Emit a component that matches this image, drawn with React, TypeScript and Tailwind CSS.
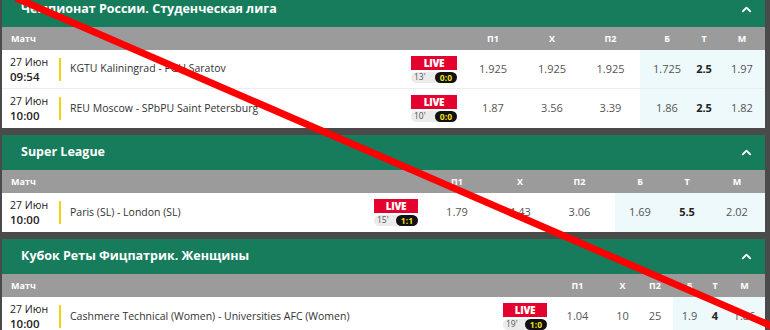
import { ChevronUp } from "lucide-react";

type Col = { label: string; w: string };

type Match = {
  date: string;
  time: string;
  teams: string;
  minute: string;
  score: string;
  odds: string[];
};

interface LeagueProps {
  title: string;
  liveW: string;
  cols: Col[];
  blueFrom: number;
  matches: Match[];
}

const LiveBadge = ({ minute, score }: { minute: string; score: string }) => (
  <div className="flex flex-col items-stretch gap-[2px]">
    <div className="h-[14px] bg-[#e4032e] text-white text-[10px] font-extrabold leading-[14px] text-center tracking-tight">
      LIVE
    </div>
    <div className="flex items-center justify-between h-[11px] rounded-full bg-[#ebebeb]">
      <span className="pl-[3px] text-[8.5px] leading-none text-[#555]">{minute}</span>
      <span className="h-[11px] px-[5px] rounded-full bg-[#111] text-[#f0df12] text-[8.5px] font-bold leading-[11px]">
        {score}
      </span>
    </div>
  </div>
);

const League = ({ title, liveW, cols, blueFrom, matches }: LeagueProps) => (
  <section className="bg-white">
    <div className="h-[35px] bg-[#167c5b] flex items-center justify-between pl-[19px] pr-[11px]">
      <h2 className="text-white text-[12.5px] font-bold">{title}</h2>
      <ChevronUp className="w-[15px] h-[15px] text-white" strokeWidth={3} />
    </div>

    <div className="h-[23px] bg-[#9b9b9b] flex items-center text-white text-[9px] font-bold">
      <div className="flex-1 pl-[9px]">Матч</div>
      <div className={liveW} />
      {cols.map((c) => (
        <div key={c.label} className={`${c.w} text-center`}>
          {c.label}
        </div>
      ))}
    </div>

    <div className="divide-y divide-[#ececec]">
      {matches.map((m) => (
        <div key={m.teams} className="h-[39px] flex items-stretch">
          <div className="flex-1 flex items-center pl-[8px]">
            <div className="w-[49px] flex flex-col gap-[1px] text-[#222]">
              <span className="text-[10.5px] leading-[13px]">{m.date}</span>
              <span className="text-[11.5px] leading-[13px] font-semibold">{m.time}</span>
            </div>
            <div className="w-[2px] h-[23px] bg-[#f2d30c]" />
            <div className="pl-[9px] text-[10.5px] text-[#333]">{m.teams}</div>
          </div>
          <div className={`${liveW} flex items-center`}>
            <div className="w-full">
              <LiveBadge minute={m.minute} score={m.score} />
            </div>
          </div>
          {cols.map((c, i) => (
            <div
              key={c.label}
              className={`${c.w} flex items-center justify-center text-[11px] ${
                i >= blueFrom ? "bg-[#eef9fc]" : ""
              } ${c.label === "Т" ? "font-bold text-[#222]" : "text-[#555]"}`}
            >
              {m.odds[i]}
            </div>
          ))}
        </div>
      ))}
    </div>
  </section>
);

export default function App() {
  return (
    <div
      className="relative w-[770px] h-[330px] overflow-hidden bg-[#4a4a4a]"
      style={{ fontFamily: '"Open Sans", "Liberation Sans", sans-serif' }}
    >
      <div className="-mt-[8px] pl-[2px] pr-[5px] flex flex-col gap-[7px]">
        <League
          title="Чемпионат России. Студенческая лига"
          liveW="w-[46px]"
          blueFrom={3}
          cols={[
            { label: "П1", w: "w-[60px] ml-[6px]" },
            { label: "X", w: "w-[58px]" },
            { label: "П2", w: "w-[59px]" },
            { label: "Б", w: "w-[54px]" },
            { label: "Т", w: "w-[20px]" },
            { label: "М", w: "w-[51px] pl-[5px]" },
          ]}
          matches={[
            {
              date: "27 Июн",
              time: "09:54",
              teams: "KGTU Kaliningrad - PGU Saratov",
              minute: "13'",
              score: "0:0",
              odds: ["1.925", "1.925", "1.925", "1.725", "2.5", "1.97"],
            },
            {
              date: "27 Июн",
              time: "10:00",
              teams: "REU Moscow - SPbPU Saint Petersburg",
              minute: "10'",
              score: "0:0",
              odds: ["1.87", "3.56", "3.39", "1.86", "2.5", "1.82"],
            },
          ]}
        />
        <League
          title="Super League"
          liveW="w-[44px]"
          blueFrom={3}
          cols={[
            { label: "П1", w: "w-[78px]" },
            { label: "X", w: "w-[48px]" },
            { label: "П2", w: "w-[71px]" },
            { label: "Б", w: "w-[50px]" },
            { label: "Т", w: "w-[44px]" },
            { label: "М", w: "w-[56px]" },
          ]}
          matches={[
            {
              date: "27 Июн",
              time: "10:00",
              teams: "Paris (SL) - London (SL)",
              minute: "15'",
              score: "1:1",
              odds: ["1.79", "4.43", "3.06", "1.69", "5.5", "2.02"],
            },
          ]}
        />
        <League
          title="Кубок Реты Фицпатрик. Женщины"
          liveW="w-[44px]"
          blueFrom={3}
          cols={[
            { label: "П1", w: "w-[61px]" },
            { label: "X", w: "w-[29px]" },
            { label: "П2", w: "w-[36px]" },
            { label: "Б", w: "w-[33px]" },
            { label: "Т", w: "w-[18px]" },
            { label: "М", w: "w-[41px]" },
          ]}
          matches={[
            {
              date: "27 Июн",
              time: "10:00",
              teams: "Cashmere Technical (Women) - Universities AFC (Women)",
              minute: "19'",
              score: "1:0",
              odds: ["1.04", "10", "25", "1.9", "4", "1.86"],
            },
          ]}
        />
      </div>

      <svg
        className="absolute inset-0 pointer-events-none"
        width="770"
        height="330"
        viewBox="0 0 770 330"
      >
        <line x1="16" y1="-2" x2="776" y2="328" stroke="#ff0000" strokeWidth="7" />
      </svg>
    </div>
  );
}
